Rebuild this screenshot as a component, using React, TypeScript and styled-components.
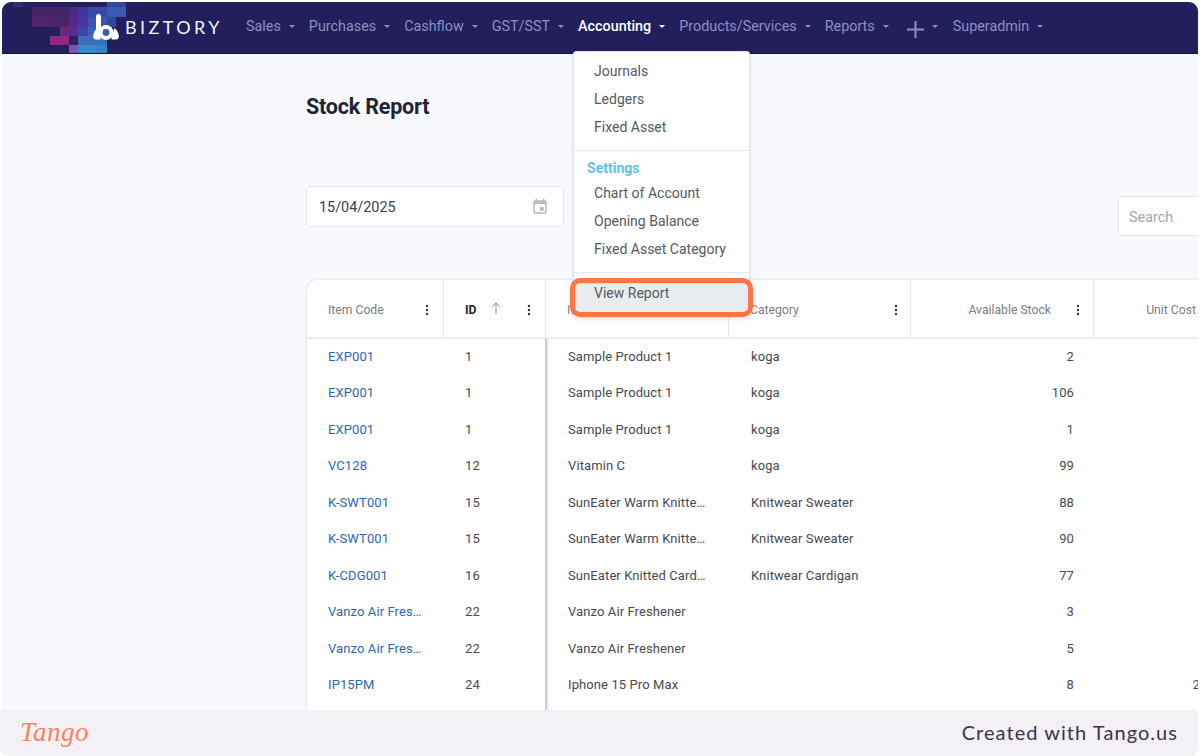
import React from "react";
import styled, { createGlobalStyle } from "styled-components";

const Global = createGlobalStyle`
  html, body { margin: 0; padding: 0; background: #fff; }
  body { font-family: Roboto, "Liberation Sans", sans-serif; }
  * { box-sizing: border-box; }
`;

const Screen = styled.div`
  width: 1200px;
  height: 756px;
  padding: 2px 2px 0;
  display: flex;
  flex-direction: column;
  overflow: hidden;
  background: #fff;
`;

const Nav = styled.nav`
  flex: none;
  height: 52px;
  display: flex;
  align-items: stretch;
  position: relative;
  z-index: 5;
  background: #221f5c;
  border-bottom: 1px solid #16143c;
  border-radius: 9px 9px 0 0;
`;

const Mosaic = styled.svg`
  flex: none;
  display: block;
  width: 124px;
  height: 51px;
  margin-right: -124px;
`;

const Brand = styled.div`
  flex: none;
  width: 237px;
  padding: 0 0 2px 91px;
  display: flex;
  align-items: center;
  position: relative;
`;

const BrandName = styled.span`
  margin-left: 6px;
  font-family: Lato, sans-serif;
  font-size: 18px;
  font-weight: 400;
  letter-spacing: 3.4px;
  color: #f4f4fa;
`;

const NavList = styled.div`
  display: flex;
  align-items: stretch;
`;

const NavItem = styled.div<{ $active?: boolean }>`
  position: relative;
  display: flex;
  align-items: center;
  gap: 8px;
  padding: 0 7px 3px;
  font-size: 14.35px;
  font-weight: ${(p) => (p.$active ? 500 : 400)};
  color: ${(p) => (p.$active ? "#ffffff" : "#8f90c0")};
  white-space: nowrap;
`;

const Caret = styled.span<{ $active?: boolean }>`
  flex: none;
  width: 0;
  height: 0;
  margin-top: 1px;
  border-left: 3.5px solid transparent;
  border-right: 3.5px solid transparent;
  border-top: 3.5px solid ${(p) => (p.$active ? "#ffffff" : "#8f90c0")};
`;

const PlusIcon = styled.svg`
  display: block;
  margin: 7px 0 0 4px;
`;

const PlusCaret = styled(Caret)`
  margin-right: 1px;
`;

const Dropdown = styled.div`
  position: absolute;
  top: 49px;
  left: 2px;
  width: 177px;
  padding: 5px 0 4px;
  background: #fff;
  border: 1px solid #dfe2e8;
  border-radius: 3px;
  box-shadow: 0 1px 4px rgba(40, 40, 70, 0.12);
  z-index: 10;
`;

const DropItem = styled.div<{ $current?: boolean }>`
  height: ${(p) => (p.$current ? "34px" : "28px")};
  padding: ${(p) => (p.$current ? "0 0 6px 20px" : "0 0 0 20px")};
  display: flex;
  align-items: center;
  font-size: 14px;
  font-weight: 400;
  color: #555a60;
  background: ${(p) => (p.$current ? "#e9ecef" : "transparent")};
`;

const DropDivider = styled.div`
  height: 1px;
  margin: 9px 0 6px;
  background: #e6e8ec;
`;

const DropHeading = styled.div`
  height: 22px;
  padding: 0 0 1px 13px;
  display: flex;
  align-items: center;
  font-size: 14px;
  font-weight: 700;
  color: #5cc3e6;
`;

const Highlight = styled.div`
  position: absolute;
  left: -4px;
  right: -4px;
  bottom: 0;
  height: 39px;
  border: 5px solid #ff7646;
  border-radius: 10px;
  pointer-events: none;
`;

const Content = styled.main`
  flex: 1;
  min-height: 0;
  padding: 0 0 0 304px;
  display: flex;
  flex-direction: column;
  align-items: flex-start;
  overflow: hidden;
  background: #f8f9fd;
`;

const Title = styled.h1`
  margin: 41px 0 0;
  height: 24px;
  line-height: 24px;
  font-size: 21.5px;
  font-weight: 700;
  letter-spacing: -0.2px;
  color: #1f2336;
`;

const FilterRow = styled.div`
  margin-top: 67px;
  display: flex;
  align-items: flex-start;
`;

const DateField = styled.div`
  flex: none;
  width: 258px;
  height: 41px;
  padding: 1px 14px 0 12px;
  display: flex;
  align-items: center;
  justify-content: space-between;
  background: #fff;
  border: 1px solid #e2e5ea;
  border-radius: 5px;
  font-size: 14.4px;
  color: #3a4050;
`;

const SearchField = styled.div`
  flex: none;
  width: 200px;
  height: 40px;
  margin: 10px 0 0 554px;
  padding: 2px 0 0 10px;
  display: flex;
  align-items: center;
  background: #fff;
  border: 1px solid #e2e5ea;
  border-radius: 5px;
  font-size: 14.4px;
  color: #a3a6ad;
`;

const Table = styled.div`
  flex: none;
  width: 935px;
  margin: 44px 0 0 1px;
  display: flex;
  flex-direction: column;
  background: #fff;
  border-radius: 11px 0 0 0;
  box-shadow: 0 0 3px rgba(60, 60, 90, 0.18);
`;

const HeadRow = styled.div`
  height: 58.5px;
  display: grid;
  grid-template-columns: 137px 102px 183px 182px 183px 148px;
  border-bottom: 2px solid #ebecef;
`;

const Body = styled.div`
  position: relative;
`;

const PinnedShadow = styled.div`
  position: absolute;
  top: 0;
  bottom: 0;
  left: 238px;
  width: 4px;
  background: linear-gradient(90deg, #c9cacd 0 1px, #c4c5c9 1px, #e6e7e9 2.5px, #ffffff 100%);
`;

const BodyRow = styled.div`
  height: 36.5px;
  display: grid;
  grid-template-columns: 137px 102px 183px 182px 183px 148px;
`;

const HeadCell = styled.div<{ $right?: boolean; $strong?: boolean; $tail?: number }>`
  padding: 3px ${(p) => p.$tail ?? 14}px 0 21px;
  display: flex;
  align-items: center;
  justify-content: ${(p) => (p.$right ? "flex-end" : "space-between")};
  border-right: 1px solid #e4e5e8;
  font-size: 12.2px;
  font-weight: ${(p) => (p.$strong ? 700 : 400)};
  color: ${(p) => (p.$strong ? "#22242c" : "#7b7d84")};
  white-space: nowrap;
`;

const SortArrow = styled.svg`
  flex: none;
  display: block;
  margin: -3px 0 0 14px;
`;

const Kebab = styled.svg`
  flex: none;
  display: block;
  margin-left: auto;
`;

const KebabRight = styled(Kebab)`
  margin-left: 25px;
`;

const Cell = styled.div<{ $right?: boolean; $link?: boolean; $offset?: boolean }>`
  min-width: 0;
  padding: ${(p) => (p.$right ? "0 20px 0 0" : `0 22px 0 ${p.$offset ? 22 : 21}px`)};
  line-height: 36.5px;
  font-size: 13px;
  letter-spacing: 0.1px;
  color: ${(p) => (p.$link ? "#2d68ad" : "#454a52")};
  text-align: ${(p) => (p.$right ? "right" : "left")};
  white-space: nowrap;
  overflow: hidden;
  text-overflow: ellipsis;
`;

const Footer = styled.footer`
  flex: none;
  height: 46px;
  margin-left: -2px;
  padding: 0 20px 2px 20px;
  display: flex;
  align-items: center;
  justify-content: space-between;
  position: relative;
  z-index: 6;
  background: #f3f1f6;
  border-radius: 0 0 9px 9px;
`;

const TangoMark = styled.span`
  font-family: "Liberation Serif", serif;
  font-style: italic;
  font-size: 27px;
  letter-spacing: 0.5px;
  color: #ff8259;
`;

const Credit = styled.span`
  font-family: Lato, sans-serif;
  font-size: 20px;
  letter-spacing: 1.05px;
  color: #3c3350;
`;

const navLeft = ["Sales", "Purchases", "Cashflow", "GST/SST"];
const navRight = ["Products/Services", "Reports"];

const rows = [
  ["EXP001", "1", "Sample Product 1", "koga", "2", "10"],
  ["EXP001", "1", "Sample Product 1", "koga", "106", "10"],
  ["EXP001", "1", "Sample Product 1", "koga", "1", "10"],
  ["VC128", "12", "Vitamin C", "koga", "99", "25"],
  ["K-SWT001", "15", "SunEater Warm Knitted Sweater", "Knitwear Sweater", "88", "60"],
  ["K-SWT001", "15", "SunEater Warm Knitted Sweater", "Knitwear Sweater", "90", "60"],
  ["K-CDG001", "16", "SunEater Knitted Cardigan", "Knitwear Cardigan", "77", "75"],
  ["Vanzo Air Freshener", "22", "Vanzo Air Freshener", "", "3", "12"],
  ["Vanzo Air Freshener", "22", "Vanzo Air Freshener", "", "5", "12"],
  ["IP15PM", "24", "Iphone 15 Pro Max", "", "8", "2999"],
  ["", "", "", "", "", ""],
];

const mosaic: [number, number, number, number, string][] = [
  [13, 0, 10, 5, "#3a2a6e"],
  [107, 0, 19, 5, "#35459f"],
  [32, 5, 28, 10, "#47246a"],
  [60, 5, 9, 10, "#3f2468"],
  [69, 5, 9, 10, "#4b2a85"],
  [78, 5, 10, 10, "#4233a0"],
  [88, 5, 19, 10, "#3a48a8"],
  [107, 5, 19, 10, "#3a5ab2"],
  [32, 15, 18, 10, "#542369"],
  [50, 15, 19, 10, "#4c2468"],
  [69, 15, 9, 10, "#552a8a"],
  [78, 15, 10, 10, "#4a35a2"],
  [88, 15, 19, 10, "#3a55b0"],
  [107, 15, 9, 10, "#34469c"],
  [60, 25, 9, 9, "#692a7e"],
  [69, 25, 9, 9, "#5a2a8e"],
  [78, 25, 10, 9, "#4244a8"],
  [88, 25, 19, 9, "#3a62b6"],
  [50, 34, 19, 9, "#8c2a80"],
  [69, 34, 9, 9, "#2b2460"],
  [78, 34, 19, 9, "#3a6cba"],
  [97, 34, 10, 9, "#3272b4"],
  [69, 43, 9, 8, "#7a55b5"],
  [78, 43, 19, 8, "#3a88cc"],
  [97, 43, 10, 8, "#3a7fc2"],
];

const KebabIcon = ({ right }: { right?: boolean }) => {
  const Icon = right ? KebabRight : Kebab;
  return (
    <Icon width="4" height="12" viewBox="0 0 4 12" fill="#34363c">
      <circle cx="2" cy="2" r="1.2" />
      <circle cx="2" cy="6" r="1.2" />
      <circle cx="2" cy="10" r="1.2" />
    </Icon>
  );
};

export default function App() {
  return (
    <>
      <Global />
      <Screen>
        <Nav>
          <Mosaic viewBox="2 0 124 51" aria-hidden="true">
            {mosaic.map(([x, y, w, h, c], i) => (
              <rect key={i} x={x} y={y} width={w} height={h} fill={c} />
            ))}
          </Mosaic>
          <Brand>
            <svg width="26" height="26" viewBox="0 0 26 26" fill="none">
              <rect x="3" y="0" width="5" height="17" rx="2.5" fill="#fff" />
              <path d="M0.2 22.5c0-3.5 2.2-7 4.5-8.5l3 11.5H3C1.2 25.5.2 24.3.2 22.5z" fill="#fff" />
              <path d="M25.8 22.5c0-3.5-2.2-7-4.5-8.5l-3 11.5H23c1.8 0 2.8-1.2 2.8-3z" fill="#fff" />
              <circle cx="13" cy="18.5" r="7.5" fill="#fff" />
              <circle cx="13" cy="18.5" r="3.4" fill="#2f5fa8" />
            </svg>
            <BrandName>BIZTORY</BrandName>
          </Brand>
          <NavList>
            {navLeft.map((n) => (
              <NavItem key={n}>
                {n}
                <Caret />
              </NavItem>
            ))}
            <NavItem $active>
              Accounting
              <Caret $active />
              <Dropdown>
                <DropItem>Journals</DropItem>
                <DropItem>Ledgers</DropItem>
                <DropItem>Fixed Asset</DropItem>
                <DropDivider />
                <DropHeading>Settings</DropHeading>
                <DropItem>Chart of Account</DropItem>
                <DropItem>Opening Balance</DropItem>
                <DropItem>Fixed Asset Category</DropItem>
                <DropDivider />
                <DropItem $current>View Report</DropItem>
                <Highlight />
              </Dropdown>
            </NavItem>
            {navRight.map((n) => (
              <NavItem key={n}>
                {n}
                <Caret />
              </NavItem>
            ))}
            <NavItem>
              <PlusIcon width="17" height="17" viewBox="0 0 17 17" stroke="#8f90c0" strokeWidth="2">
                <path d="M8.5 0v17M0 8.5h17" />
              </PlusIcon>
              <PlusCaret />
            </NavItem>
            <NavItem>
              Superadmin
              <Caret />
            </NavItem>
          </NavList>
        </Nav>
        <Content>
          <Title>Stock Report</Title>
          <FilterRow>
            <DateField>
              15/04/2025
              <svg width="18" height="18" viewBox="0 0 24 24" fill="#b4bcc9">
                <path d="M17 12h-5v5h5v-5zM16 1v2H8V1H6v2H5c-1.11 0-1.99.9-1.99 2L3 19c0 1.1.89 2 2 2h14c1.1 0 2-.9 2-2V5c0-1.1-.9-2-2-2h-1V1h-2zm3 18H5V8h14v11z" />
              </svg>
            </DateField>
            <SearchField>Search</SearchField>
          </FilterRow>
          <Table>
            <HeadRow>
              <HeadCell>
                Item Code
                <KebabIcon />
              </HeadCell>
              <HeadCell $strong>
                ID
                <SortArrow width="10" height="12" viewBox="0 0 10 12" fill="none" stroke="#8b8d94" strokeWidth="1">
                  <path d="M5 12V1M1.5 4.5 5 1l3.5 3.5" />
                </SortArrow>
                <KebabIcon />
              </HeadCell>
              <HeadCell>
                Item Name
                <KebabIcon />
              </HeadCell>
              <HeadCell $tail={12}>
                Category
                <KebabIcon />
              </HeadCell>
              <HeadCell $right $tail={13}>
                Available Stock
                <KebabIcon right />
              </HeadCell>
              <HeadCell $right $tail={16}>
                Unit Cost
                <KebabIcon right />
              </HeadCell>
            </HeadRow>
            <Body>
              {rows.map((r, i) => (
                <BodyRow key={i}>
                  <Cell $link>{r[0]}</Cell>
                  <Cell>{r[1]}</Cell>
                  <Cell $offset>{r[2]}</Cell>
                  <Cell $offset>{r[3]}</Cell>
                  <Cell $right>{r[4]}</Cell>
                  <Cell $right>{r[5]}</Cell>
                </BodyRow>
              ))}
              <PinnedShadow />
            </Body>
          </Table>
        </Content>
        <Footer>
          <TangoMark>Tango</TangoMark>
          <Credit>Created with Tango.us</Credit>
        </Footer>
      </Screen>
    </>
  );
}
